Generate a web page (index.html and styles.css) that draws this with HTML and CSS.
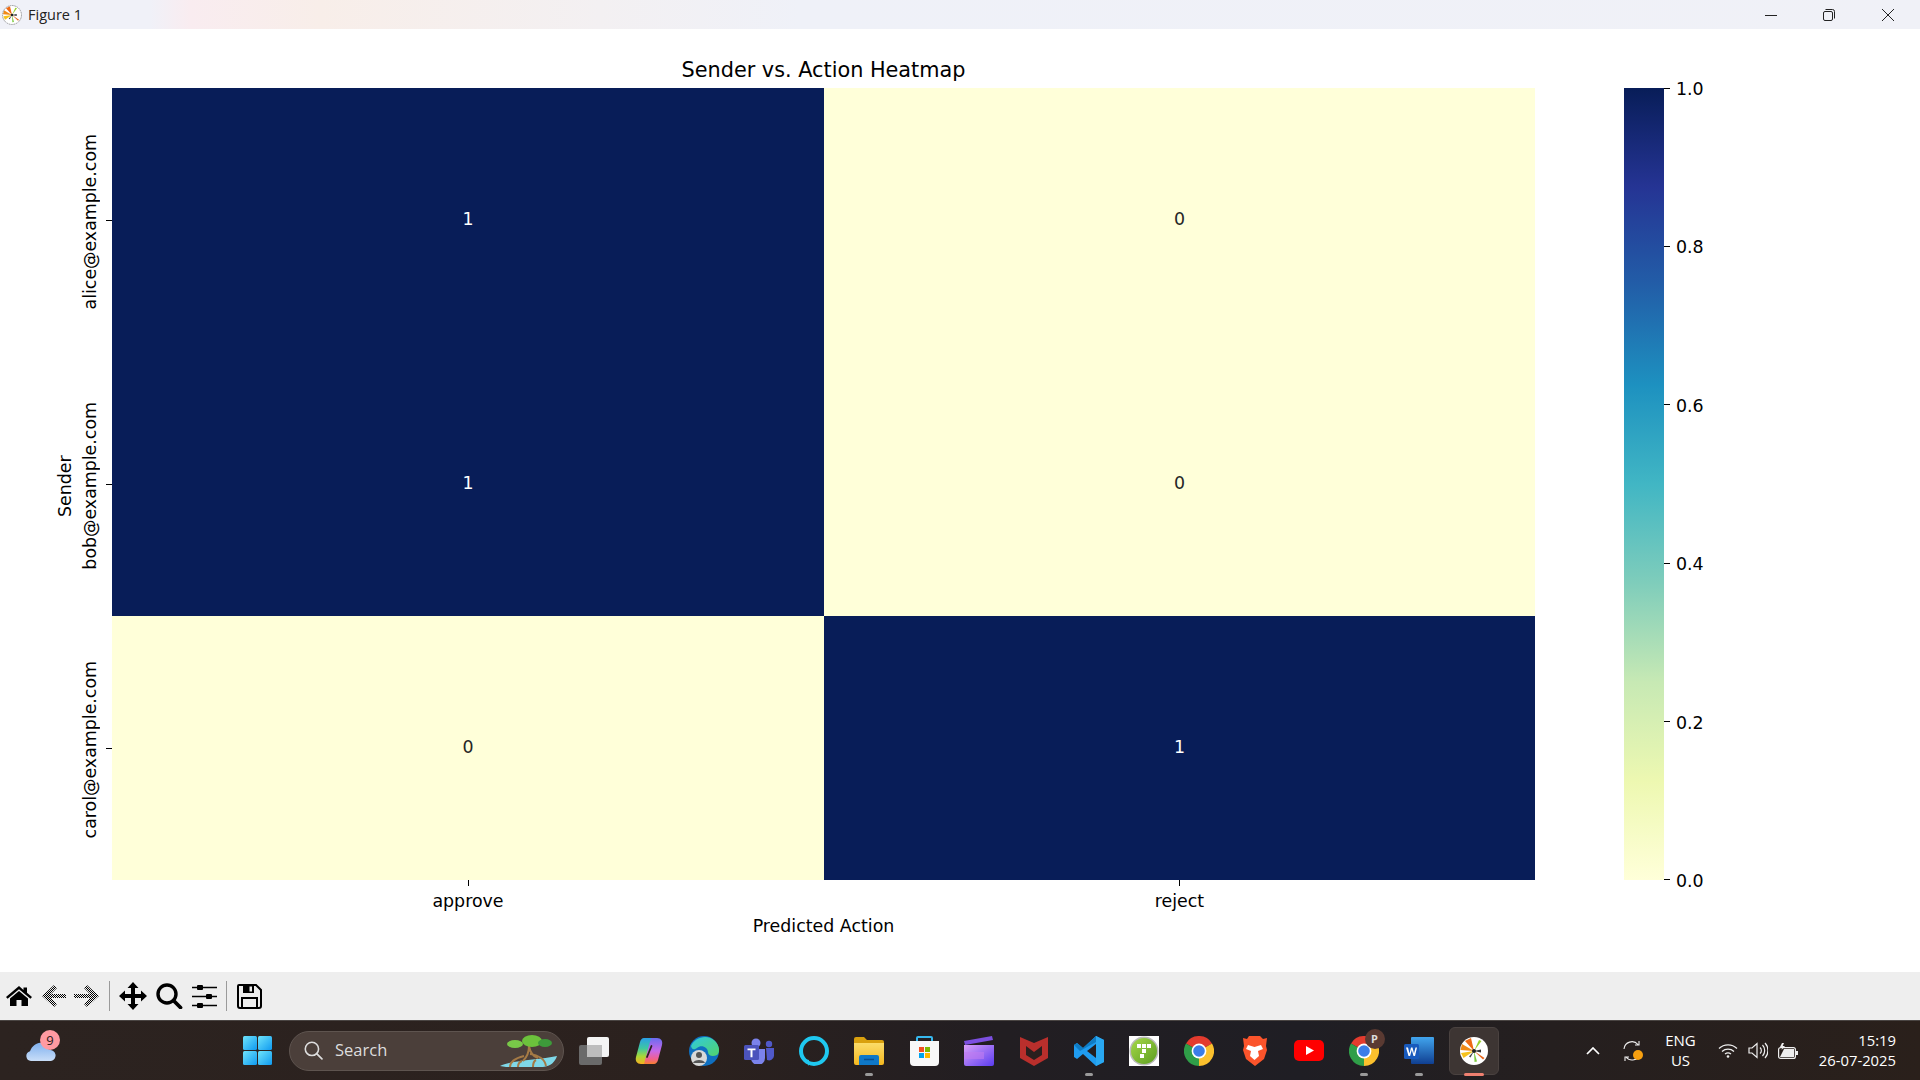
FILE: index.html
```html
<!DOCTYPE html>
<html lang="en">
<head>
<meta charset="utf-8">
<title>Figure 1</title>
<link rel="stylesheet" href="styles.css">
</head>
<body>
<svg class="defs" width="0" height="0" aria-hidden="true">
  <defs>
    <pattern id="dither" width="2" height="2" patternUnits="userSpaceOnUse">
      <rect width="1" height="1" fill="#000"/><rect x="1" y="1" width="1" height="1" fill="#000"/>
    </pattern>
    <symbol id="mpl" viewBox="0 0 30 30">
      <circle cx="15" cy="15" r="14" fill="#fff"/>
      <path d="M15 15L6 5l6-3z" fill="#ee6a14"/>
      <path d="M15 15L3 8l-1.500 6z" fill="#f08a18"/>
      <path d="M15 15L2 17l2.500 5z" fill="#f6c21c"/>
      <path d="M15 15l5-11 2.500 1z" fill="#9ad02c"/>
      <path d="M15 15l.5 11 2.500-.5z" fill="#7ecb40"/>
      <path d="M15 15l9 8.500 1.500-1.500z" fill="#e8651a"/>
      <path d="M15 15l7-1.500v3z" fill="#333"/>
      <path d="M15 15l-5 5.500 1.500 1z" fill="#444"/>
      <circle cx="15" cy="15" r="2" fill="#222"/>
    </symbol>
    <symbol id="chrome" viewBox="0 0 30 30">
      <path d="M15 15L2 7.500A15 15 0 0 1 28 7.500z" fill="#e33b2e"/>
      <path d="M15 15L2 7.500A15 15 0 0 0 15 30z" fill="#2f9e48"/>
      <path d="M15 15L28 7.500A15 15 0 0 1 15 30z" fill="#fbc02d"/>
      <circle cx="15" cy="15" r="7.400" fill="#fff"/>
      <circle cx="15" cy="15" r="5.800" fill="#3b7de8"/>
    </symbol>
    <linearGradient id="winG" x1="0" y1="0" x2="1" y2="1"><stop offset="0" stop-color="#6fe4fb"/><stop offset="1" stop-color="#0f9af0"/></linearGradient>
    <linearGradient id="cloudG" x1="0" y1="0" x2="0" y2="1"><stop offset="0" stop-color="#7fb0ee"/><stop offset="1" stop-color="#c9def8"/></linearGradient>
    <linearGradient id="copG" x1="0" y1="0" x2="0" y2="1"><stop offset="0" stop-color="#2a9fe8"/><stop offset=".4" stop-color="#3fc8a0"/><stop offset=".7" stop-color="#a8d838"/><stop offset="1" stop-color="#f8b020"/></linearGradient>
    <linearGradient id="copH" x1="0" y1="0" x2="0" y2="1"><stop offset="0" stop-color="#6a6cf0"/><stop offset=".5" stop-color="#c868e8"/><stop offset=".8" stop-color="#f06090"/><stop offset="1" stop-color="#f88030"/></linearGradient>
    <linearGradient id="edgeG" x1="0" y1="0" x2="1" y2="1"><stop offset="0" stop-color="#2fc9e0"/><stop offset="1" stop-color="#52d36a"/></linearGradient>
    <linearGradient id="folder" x1="0" y1="0" x2="0" y2="1"><stop offset="0" stop-color="#fbdc6a"/><stop offset="1" stop-color="#f5b81f"/></linearGradient>
    <linearGradient id="clip" x1="0" y1="0" x2="1" y2="1"><stop offset="0" stop-color="#dba0f8"/><stop offset="1" stop-color="#5a3cf0"/></linearGradient>
    <linearGradient id="word" x1="0" y1="0" x2="0" y2="1"><stop offset="0" stop-color="#41a5ee"/><stop offset="1" stop-color="#103f91"/></linearGradient>
    <linearGradient id="green" x1="0" y1="0" x2="1" y2="1"><stop offset="0" stop-color="#a6d84a"/><stop offset="1" stop-color="#5c9e20"/></linearGradient>
  </defs>
</svg>

<div class="window">
  <header class="titlebar">
    <svg class="app-icon" width="20" height="20" viewBox="0 0 30 30"><use href="#mpl"/><circle cx="15" cy="15" r="14.200" fill="none" stroke="#888" stroke-width="1.200" stroke-dasharray="2.500 1"/></svg>
    <span class="window-title">Figure 1</span>
    <div class="window-controls">
      <span class="wc"><svg width="12" height="12" viewBox="0 0 12 12"><path d="M0 6.500h12" stroke="#222" fill="none"/></svg></span>
      <span class="wc"><svg width="12" height="12" viewBox="0 0 12 12"><rect x=".5" y="2.500" width="9" height="9" rx="1.500" fill="none" stroke="#222"/><path d="M2.500 .5h7a2 2 0 0 1 2 2v7" fill="none" stroke="#222"/></svg></span>
      <span class="wc"><svg width="12" height="12" viewBox="0 0 12 12"><path d="M0 0l12 12M12 0L0 12" stroke="#222" fill="none"/></svg></span>
    </div>
  </header>

  <main class="figure">
    <h1 class="plot-title">Sender vs. Action Heatmap</h1>

    <div class="yaxis">
      <div class="ylabel">Sender</div>
      <div class="yticks">
        <div class="ytick"><span class="ytick-label">alice@example.com</span><i class="tick-h"></i></div>
        <div class="ytick"><span class="ytick-label">bob@example.com</span><i class="tick-h"></i></div>
        <div class="ytick"><span class="ytick-label">carol@example.com</span><i class="tick-h"></i></div>
      </div>
    </div>

    <div class="heatmap">
      <div class="cell dark">1</div><div class="cell light">0</div>
      <div class="cell dark">1</div><div class="cell light">0</div>
      <div class="cell light">0</div><div class="cell dark">1</div>
    </div>

    <div class="colorbar"></div>
    <div class="cbar-ticks">
      <div class="cbar-tick"><i class="tick-h"></i><span>1.0</span></div>
      <div class="cbar-tick"><i class="tick-h"></i><span>0.8</span></div>
      <div class="cbar-tick"><i class="tick-h"></i><span>0.6</span></div>
      <div class="cbar-tick"><i class="tick-h"></i><span>0.4</span></div>
      <div class="cbar-tick"><i class="tick-h"></i><span>0.2</span></div>
      <div class="cbar-tick"><i class="tick-h"></i><span>0.0</span></div>
    </div>

    <div class="xaxis">
      <div class="xticks">
        <div class="xtick"><i class="tick-v"></i><span>approve</span></div>
        <div class="xtick"><i class="tick-v"></i><span>reject</span></div>
      </div>
      <div class="xlabel">Predicted Action</div>
    </div>
  </main>

  <nav class="toolbar">
    <svg class="tb tb-home" width="26" height="20" viewBox="0 0 26 20"><path d="M13 0L0 11l1.600 1.800L13 3.200l11.400 9.600L26 11l-5-4.200V1.500h-3.500v2.400z"/><path d="M13 5L4 12.600V20h6.500v-6h5v6H22v-7.400z"/></svg>
    <svg class="tb tb-back" width="24" height="24" viewBox="0 0 24 24"><path d="M12 1L0 12l12 11 3-3-6-6h15v-4H9l6-6z" fill="url(#dither)"/></svg>
    <svg class="tb tb-fwd" width="25" height="24" viewBox="0 0 25 24"><path d="M13 1l12 11-12 11-3-3 6-6H0v-4h16l-6-6z" fill="url(#dither)"/></svg>
    <i class="tb-sep"></i>
    <svg class="tb tb-move" width="28" height="28" viewBox="0 0 28 28"><path d="M14 0l5.500 6H16v6h6V8.500l6 5.500-6 5.500V16h-6v6h3.500L14 28l-5.500-6H12v-6H6v3.500L0 14l6-5.500V12h6V6H8.500z"/></svg>
    <svg class="tb tb-zoom" width="27" height="26" viewBox="0 0 27 26"><circle cx="11" cy="11" r="9" fill="none" stroke="#000" stroke-width="3.400"/><path d="M17.500 17.500l7 7" stroke="#000" stroke-width="3.800" stroke-linecap="round"/></svg>
    <svg class="tb tb-sliders" width="25" height="23" viewBox="0 0 25 23"><path d="M0 2.500h25M0 11.500h25M0 20.500h25" stroke="#000" stroke-width="1.400"/><rect x="5" y="0" width="6" height="5" rx="1"/><rect x="14" y="9" width="6" height="5" rx="1"/><rect x="5" y="18" width="6" height="5" rx="1"/></svg>
    <i class="tb-sep tb-sep2"></i>
    <svg class="tb tb-save" width="25" height="25" viewBox="0 0 25 25"><path d="M2 1h17l5 5v16a2 2 0 0 1-2 2H3a2 2 0 0 1-2-2V2a1 1 0 0 1 1-1z" fill="none" stroke="#000" stroke-width="2"/><path d="M6 1h11v8H6z"/><rect x="12.500" y="2.500" width="2.500" height="5" fill="#eee"/><rect x="5" y="14" width="15" height="10" fill="none" stroke="#000" stroke-width="2"/></svg>
  </nav>

  <footer class="taskbar">
    <div class="weather">
      <svg width="30" height="20" viewBox="0 0 30 20"><path d="M5 20a5 5 0 0 1-1-9.800C6 5 11 1 16 2c4 1 6 3 7 7a5.500 5.500 0 0 1 2 11z" fill="url(#cloudG)"/></svg>
      <span class="weather-badge">9</span>
    </div>
    <span class="start"><svg width="29" height="29" viewBox="0 0 29 29"><rect width="14" height="14" rx="1.500" fill="url(#winG)"/><rect x="15" width="14" height="14" rx="1.500" fill="url(#winG)"/><rect y="15" width="14" height="14" rx="1.500" fill="url(#winG)"/><rect x="15" y="15" width="14" height="14" rx="1.500" fill="url(#winG)"/></svg></span>
    <div class="search">
      <svg class="search-icon" width="19" height="19" viewBox="0 0 18 18"><circle cx="7.500" cy="7.500" r="6.300" fill="none" stroke="#ddd" stroke-width="1.500"/><path d="M12 12l5 5" stroke="#ddd" stroke-width="1.600" stroke-linecap="round"/></svg>
      <span class="search-text">Search</span>
      <svg class="mangrove" width="58" height="34" viewBox="0 0 58 34">
        <path d="M0 32C12 26 40 26 57 22c-2 6-6 10-14 11H6z" fill="#7fd8e8"/>
        <path d="M29 12c0 6-1 10-6 15M29 12c1 6 3 10 9 12M24 22c-8 2-14 5-14 11M30 20c8 1 15 5 16 12M22 27c-3 1-4 3-4 6M36 26c-2 1-3 4-3 7" fill="none" stroke="#a57a45" stroke-width="2"/>
        <ellipse cx="32" cy="7" rx="10" ry="6" fill="#6cc23c"/><ellipse cx="15" cy="10" rx="8" ry="4" fill="#78c848"/><ellipse cx="45" cy="9" rx="7" ry="4" fill="#3d9a3a"/>
      </svg>
    </div>
    <div class="apps">
      <span class="app"><svg width="30" height="28" viewBox="0 0 30 28"><rect y="8" width="23" height="20" rx="2" fill="#6a6a6a"/><rect x="8" width="22" height="20" rx="2" fill="#f4f4f4"/><rect x="8" y="8" width="15" height="12" fill="#bdbdbd"/></svg></span>
      <span class="app"><svg width="28" height="28" viewBox="0 0 28 28"><path d="M9 1h10L12 27H6C2 27 0 24 1 20L5 5c.5-2 2-4 4-4z" fill="url(#copG)"/><path d="M19 27H9L16 1h6c4 0 6 3 5 7l-4 15c-.5 2-2 4-4 4z" fill="url(#copH)"/><path d="M16.500 9L12 20" stroke="#2a1f1e" stroke-width="1.800" stroke-linecap="round"/></svg></span>
      <span class="app"><svg width="30" height="30" viewBox="0 0 30 30"><circle cx="15" cy="15" r="15" fill="#0f6fc0"/><path d="M2 10C5 2 18-3 26 5c5 5 5 12 2 14-4 2-9 1-9-3 0-5-7-8-11-4-3 2-5 2-6-2z" fill="url(#edgeG)"/><circle cx="10" cy="22" r="8" fill="#d9d9d9"/><circle cx="10" cy="19" r="3" fill="#555"/><path d="M4 27c1-4 11-4 12 0z" fill="#555"/></svg></span>
      <span class="app"><svg width="30" height="26" viewBox="0 0 30 26"><circle cx="12" cy="5" r="4.500" fill="#7b83eb"/><circle cx="25" cy="6" r="3.200" fill="#5059c9"/><path d="M7 11h14v9a7 7 0 0 1-14 0z" fill="#7b83eb"/><path d="M22 10h8v8a5 5 0 0 1-7 4z" fill="#5059c9"/><rect y="7" width="15" height="15" rx="1.500" fill="#4b53bc"/><path d="M3.500 10.500h8v1.800H8.500v7h-2v-7h-3z" fill="#fff"/></svg></span>
      <span class="app"><svg width="30" height="30" viewBox="0 0 30 30"><circle cx="15" cy="15" r="13" fill="none" stroke="#1fc8f0" stroke-width="4"/><path d="M6 23l4 1v6z" fill="#1fc8f0"/></svg></span>
      <span class="app"><svg width="30" height="28" viewBox="0 0 30 28"><path d="M0 2a2 2 0 0 1 2-2h8l3 3h15a2 2 0 0 1 2 2v3H0z" fill="#d9a00e"/><path d="M0 6h30v20a2 2 0 0 1-2 2H2a2 2 0 0 1-2-2z" fill="url(#folder)"/><path d="M5 28v-8a2 2 0 0 1 2-2h16a2 2 0 0 1 2 2v8z" fill="#0f78c8"/><path d="M10 22.500h10" stroke="#0a4f90" stroke-width="1.500"/></svg></span>
      <span class="app"><svg width="29" height="30" viewBox="0 0 29 30"><path d="M7 6V2a1 1 0 0 1 1-1h13a1 1 0 0 1 1 1v4" fill="none" stroke="#36b8ee" stroke-width="2"/><path d="M0 5h29v21a4 4 0 0 1-4 4H4a4 4 0 0 1-4-4z" fill="#f8f8f8"/><rect x="9" y="11" width="5" height="5" fill="#f25022"/><rect x="15" y="11" width="5" height="5" fill="#7fba00"/><rect x="9" y="17" width="5" height="5" fill="#00a4ef"/><rect x="15" y="17" width="5" height="5" fill="#ffb900"/></svg></span>
      <span class="app"><svg width="30" height="30" viewBox="0 0 30 30"><path d="M0 5L28 0l1 4L1 9z" fill="#7c4fe0"/><path d="M0 9h30v19a2 2 0 0 1-2 2H2a2 2 0 0 1-2-2z" fill="url(#clip)"/><path d="M0 16h20v7H0z" fill="#c07cf0" opacity=".6"/></svg></span>
      <span class="app"><svg width="28" height="30" viewBox="0 0 28 30"><path d="M0 1l14 6 14-6v21l-14 8-14-8z" fill="#b92f2c"/><path d="M6 10l8 6 8-6v9l-8 5-8-5z" fill="#2a1f1e"/></svg></span>
      <span class="app"><svg width="30" height="30" viewBox="0 0 30 30"><path d="M22 0l8 4v22l-8 4-13-12-6 5-3-2v-12l3-2 6 5z" fill="#1f9cf0"/><path d="M22 8l-9 7 9 7z" fill="#231f22"/><path d="M22 0L9 12 3 7l-3 2 6 6 16-9z" fill="#0f7cc4"/><path d="M30 4v22l-8 4V0z" fill="#29a8f2"/></svg></span>
      <span class="app"><svg width="30" height="30" viewBox="0 0 30 30"><rect width="30" height="30" fill="#fff"/><circle cx="15" cy="15" r="14.500" fill="#bbb"/><circle cx="15" cy="15" r="13" fill="url(#green)"/><path d="M8 8h4v4H8zM13 8h4v4h-4zM18 8h4v4h-4zM13 13h4v4h-4zM11 18h4v4h-4z" fill="#fff"/></svg></span>
      <span class="app"><svg width="30" height="30"><use href="#chrome"/></svg></span>
      <span class="app"><svg width="25" height="30" viewBox="0 0 25 30"><path d="M7 0h11l3 3 4-1-1 8 1 4-3 9-9 7-9-7-3-9 1-4-1-8 4 1z" fill="#fb542b"/><path d="M6 9l6.500 2L19 9l2 4-5 2 1 5-4.500 4L8 20l1-5-5-2z" fill="#fff"/></svg></span>
      <span class="app"><svg width="30" height="21" viewBox="0 0 30 21"><rect width="30" height="21" rx="5" fill="#f00"/><path d="M12 6l8 4.500-8 4.500z" fill="#fff"/></svg></span>
      <span class="app"><svg width="30" height="30"><use href="#chrome"/></svg><b class="profile">P</b></span>
      <span class="app"><svg width="30" height="27" viewBox="0 0 30 27"><path d="M7 1a1 1 0 0 1 1-1h21a1 1 0 0 1 1 1v25a1 1 0 0 1-1 1H8a1 1 0 0 1-1-1z" fill="url(#word)"/><rect y="7" width="15" height="15" rx="1.500" fill="#185abd"/><path d="M2 10.500h2l1.500 6 1.500-6h1.500l1.500 6 1.500-6h1.500L11 19H9.500l-1.700-6-1.700 6H4.500z" fill="#fff"/></svg></span>
      <span class="app app-active"><svg width="30" height="30"><use href="#mpl"/></svg></span>
      <i class="dot dot-files"></i><i class="dot dot-code"></i><i class="dot dot-chrome"></i><i class="dot dot-word"></i><i class="dot dot-active"></i>
    </div>
    <div class="tray">
      <span class="tray-item tray-chevron"><svg width="14" height="8" viewBox="0 0 14 8"><path d="M1 7l6-6 6 6" fill="none" stroke="#fff" stroke-width="1.700"/></svg></span>
      <span class="tray-item tray-sync"><svg width="20" height="20" viewBox="0 0 20 20"><path d="M1 8a8 8 0 0 1 14-4.500M16 0v4h-4M17 13a8 8 0 0 1-14 3M2 20v-4h4" fill="none" stroke="#eee" stroke-width="1.100"/><circle cx="15" cy="14" r="5" fill="#f7a010"/></svg></span>
      <span class="tray-lang"><span>ENG</span><span>US</span></span>
      <span class="tray-item tray-icon"><svg width="20" height="15" viewBox="0 0 20 15"><path d="M1 5.500a13 13 0 0 1 18 0M4 8.500a9 9 0 0 1 12 0M7 11a5 5 0 0 1 6 0" fill="none" stroke="#eee" stroke-width="1.300"/><circle cx="10" cy="13.500" r="1.300" fill="#eee"/></svg></span>
      <span class="tray-item tray-icon"><svg width="20" height="17" viewBox="0 0 20 17"><path d="M1 6v5h3l5 4.500v-14L4 6z" fill="none" stroke="#eee" stroke-width="1.200"/><path d="M12 5.500a4 4 0 0 1 0 6M14.500 3a8 8 0 0 1 0 11M17 1a11 11 0 0 1 0 15" fill="none" stroke="#eee" stroke-width="1.200"/></svg></span>
      <span class="tray-item tray-icon"><svg width="20" height="16" viewBox="0 0 20 16"><rect x=".6" y="4.600" width="16.800" height="10.800" rx="2" fill="none" stroke="#eee" stroke-width="1.200"/><path d="M2 14l4-8h10v8z" fill="#eee"/><rect x="18" y="8" width="2" height="4" fill="#eee"/><path d="M4 0L2 4h2.500L3.500 7 7 3H4.700L6 0z" fill="#eee"/></svg></span>
      <span class="clock"><span>15:19</span><span>26-07-2025</span></span>
    </div>
  </footer>
</div>
</body>
</html>
```

FILE: styles.css
```css
* { box-sizing: border-box; }
html, body { margin: 0; padding: 0; height: 100%; overflow: hidden; }
body { font-family: "DejaVu Sans", sans-serif; background: #fff; color: #000; }
.defs { position: absolute; }
.window { display: flex; flex-direction: column; width: 1920px; height: 1080px; }

/* title bar */
.titlebar {
  display: flex; align-items: center; height: 29px; flex: none; padding-left: 2px;
  background: linear-gradient(90deg, #f0f1f8 0, #f0f1f8 150px, #f9ecf0 190px, #f8eee9 320px, #f3f0f2 600px, #eff1f8 800px, #f0f1f7 100%);
}
.app-icon { display: block; }
.window-title { margin-left: 6px; font: 14.5px "Open Sans", sans-serif; color: #222; }
.window-controls { display: flex; margin-left: auto; padding-right: 3px; }
.wc { display: flex; justify-content: center; width: 58.5px; }

/* figure */
.figure {
  flex: 1; display: grid; background: #fff;
  grid-template-columns: 112px 1423px 89px 40px 1fr;
  grid-template-rows: 59px 792px 1fr;
  font-size: 17.4px;
}
.plot-title {
  grid-column: 2; grid-row: 1; align-self: end; margin: 0 0 6px; text-align: center;
  font-size: 20.8px; font-weight: 400; line-height: 24px;
}
.yaxis { grid-column: 1; grid-row: 2; display: flex; padding-left: 54px; }
.ylabel, .ytick-label { writing-mode: vertical-rl; transform: rotate(180deg); white-space: nowrap; }
.ylabel { width: 22px; margin-top: 4px; display: flex; align-items: center; justify-content: center; line-height: 22px; }
.yticks { flex: 1; display: flex; flex-direction: column; }
.ytick { flex: 1; display: flex; align-items: center; }
.ytick-label { width: 26px; margin: 3px 3px 0 1px; line-height: 26px; text-align: center; }
.tick-h { display: block; width: 6px; height: 1px; background: #000; flex: none; }
.tick-v { display: block; width: 1px; height: 6px; background: #000; }

.heatmap { grid-column: 2; grid-row: 2; display: grid; grid-template-columns: 712px 1fr; grid-template-rows: repeat(3, 1fr); }
.cell { display: flex; align-items: center; justify-content: center; padding-bottom: 2px; }
.dark { background: #081d58; color: #fff; }
.light { background: #ffffd9; color: #262626; }

.colorbar {
  grid-column: 4; grid-row: 2;
  background: linear-gradient(to top, #ffffd9 0, #edf8b1 12.5%, #c7e9b4 25%, #7fcdbb 37.5%, #41b6c4 50%, #1d91c0 62.5%, #225ea8 75%, #253494 87.5%, #081d58 100%);
}
.cbar-ticks { grid-column: 5; grid-row: 2; display: flex; flex-direction: column; justify-content: space-between; }
.cbar-tick { display: flex; align-items: center; height: 0; gap: 6px; }
.cbar-tick span { margin-top: 2px; }

.xaxis { grid-column: 2; grid-row: 3; display: flex; flex-direction: column; }
.xticks { display: grid; grid-template-columns: 712px 1fr; }
.xtick { display: flex; flex-direction: column; align-items: center; line-height: 20px; }
.xtick span { margin-top: 5px; }
.xlabel { margin-top: 5px; text-align: center; line-height: 20px; }

/* toolbar */
.toolbar { position: relative; display: flex; align-items: center; height: 48px; flex: none; background: #eee; padding-left: 6px; }
.tb { display: block; flex: none; }
.tb-back { margin-left: 10px; }
.tb-fwd { margin-left: 8px; }
.tb-sep { display: block; width: 1px; height: 30px; background: #9a9a9a; margin-left: 10px; flex: none; }
.tb-move { margin-left: 9px; }
.tb-zoom { margin-left: 9px; }
.tb-sliders { margin-left: 9px; }
.tb-sep2 { margin-left: 9px; }
.tb-save { margin-left: 10px; }

/* taskbar */
.taskbar {
  display: flex; align-items: center; height: 60px; flex: none; color: #fff;
  font-family: "Open Sans", sans-serif;
  background: linear-gradient(90deg, #2c2320 0, #2b211e 700px, #221e22 1000px, #1f1e24 1300px, #251f1f 1550px, #2a201b 100%);
  border-top: 1px solid #4a4543;
}
.weather { position: relative; display: flex; width: 230px; padding-left: 26px; flex: none; }
.weather-badge {
  position: absolute; left: 40px; top: -11px; width: 20px; height: 20px; border-radius: 50%;
  background: #ff9aa2; color: #2a1a1a; font-size: 13px; line-height: 20px; text-align: center;
}
.start { display: flex; justify-content: center; width: 55px; flex: none; }
.search {
  display: flex; align-items: center; width: 275px; height: 40px; margin-left: 4px; flex: none;
  border-radius: 20px; background: #4b3f3a; border: 1px solid #5e544f; padding-left: 14px; overflow: hidden;
}
.search-text { margin: 0 0 2px 12px; font-size: 16.5px; color: #ddd; }
.mangrove { margin-left: auto; margin-right: 5px; margin-top: 1px; }
.apps { position: relative; display: flex; margin-left: 2.5px; flex: none; }
.app { position: relative; display: flex; align-items: center; justify-content: center; width: 55px; height: 48px; flex: none; }
.app-active { width: 50px; margin: 0 2.5px; background: #3d3533; border-radius: 6px; border: 1px solid #4a4240; }
.profile {
  position: absolute; left: 28px; top: 2px; width: 20px; height: 20px; border-radius: 50%;
  background: #5a3a32; color: #ddd; font: 700 11px/20px "Open Sans", sans-serif; text-align: center;
}
.dot { position: absolute; top: 46px; width: 8px; height: 3px; border-radius: 2px; background: #9a9a9a; }
.dot-files { left: 298.5px; }
.dot-code { left: 518.5px; }
.dot-chrome { left: 793.5px; }
.dot-word { left: 848.5px; }
.dot-active { left: 897.5px; width: 20px; background: #f08070; }
.tray { display: flex; align-items: center; margin-left: auto; padding-right: 24px; }
.tray-item { display: flex; justify-content: center; flex: none; }
.tray-chevron, .tray-sync { width: 40px; }
.tray-lang { display: flex; flex-direction: column; align-items: center; width: 55px; font-size: 15px; line-height: 20px; margin: 0 5px 2px 0; }
.tray-icon { width: 30px; }
.clock { display: flex; flex-direction: column; align-items: flex-end; width: 93px; font-size: 14.8px; line-height: 20px; margin-bottom: 2px; }
```
